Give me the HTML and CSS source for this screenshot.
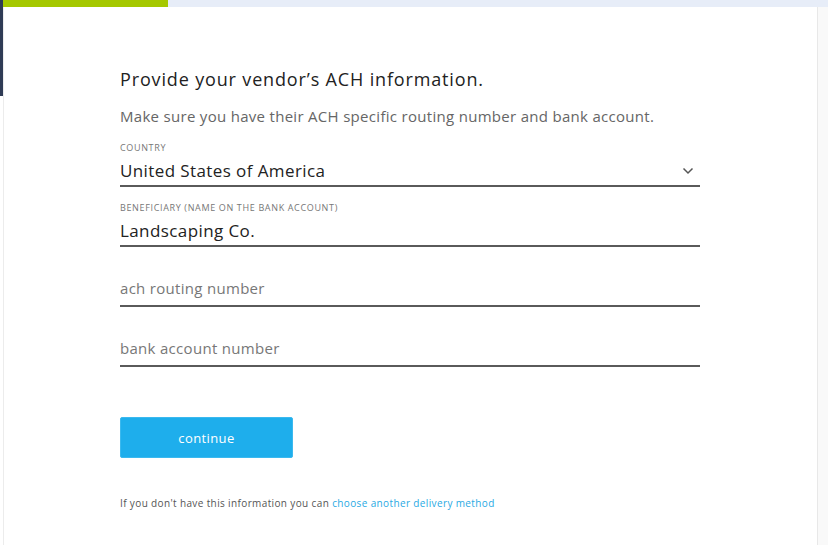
FILE: index.html
```html
<!DOCTYPE html>
<html>
<head>
<meta charset="utf-8">
<link rel="stylesheet" href="styles.css">
</head>
<body>
<div class="page">
  <div class="rail"><div class="rail-top"></div></div>
  <div class="column">
    <div class="progress"><div class="progress-fill"></div></div>
    <div class="body-row">
      <main class="main">
        <h1 class="title">Provide your vendor’s ACH information.</h1>
        <p class="subtitle">Make sure you have their ACH specific routing number and bank account.</p>
        <div class="field">
          <div class="label">COUNTRY</div>
          <div class="value select">
            <span>United States of America</span>
            <svg class="chev" width="12" height="8" viewBox="0 0 12 8"><path d="M1.5 1.5 L6 6 L10.5 1.5" fill="none" stroke="#555" stroke-width="1.5"/></svg>
          </div>
        </div>
        <div class="field">
          <div class="label">BENEFICIARY (NAME ON THE BANK ACCOUNT)</div>
          <div class="value">Landscaping Co.</div>
        </div>
        <div class="field">
          <div class="label"></div>
          <div class="value placeholder">ach routing number</div>
        </div>
        <div class="field">
          <div class="label"></div>
          <div class="value placeholder">bank account number</div>
        </div>
        <button class="btn">continue</button>
        <p class="footnote">If you don't have this information you can <a href="#">choose another delivery method</a></p>
      </main>
      <div class="gutter"></div>
    </div>
  </div>
</div>
</body>
</html>
```
FILE: styles.css
```css
html, body { margin: 0; padding: 0; }
body {
  font-family: "Open Sans", Lato, sans-serif;
  background: #ffffff;
  width: 828px;
  height: 545px;
  overflow: hidden;
}
.page { display: flex; height: 545px; }
.rail { width: 3px; flex: none; }
.rail-top { width: 3px; height: 96px; background: #2f3b55; }
.column { flex: 1; display: flex; flex-direction: column; }
.progress { height: 7px; background: #e7edf8; flex: none; }
.progress-fill { width: 165px; height: 7px; background: #a5c800; }
.body-row { flex: 1; display: flex; }
.main {
  flex: 1;
  background: #fff;
  border-left: 1px solid #ececec;
  border-right: 1px solid #e8e8e8;
  padding: 61px 0 0 116px;
}
.gutter { width: 10px; background: #f9f9f9; flex: none; }
.title { margin: 0; font-size: 18px; font-weight: 400; color: #222; line-height: 22px; letter-spacing: 0.85px; }
.subtitle { margin: 16px 0 0; font-size: 15px; color: #666; line-height: 20px; letter-spacing: 0.3px; }
.field { width: 580px; margin-top: 14px; }
.subtitle + .field { margin-top: 15px; }
.label { font-size: 9px; color: #777; height: 14px; line-height: 14px; margin-bottom: 2px; letter-spacing: 0.65px; }
.value {
  font-size: 17px; color: #222; letter-spacing: 0.4px;
  height: 28px; line-height: 28px;
  border-bottom: 2px solid #5a5a5a;
  display: flex; justify-content: space-between; align-items: center;
}
.placeholder {
  color: #777; font-size: 15px; letter-spacing: 0.3px;
  height: 22px; line-height: 22px; padding-bottom: 6px;
}
.chev { margin-right: 6px; }
.btn {
  display: block;
  margin-top: 50px;
  width: 173px; height: 41px;
  background: #1eaeec; color: #fff;
  border: 1px solid #3bb9ef; border-radius: 2px;
  font-family: inherit; font-size: 13px; letter-spacing: 0.4px;
}
.footnote { margin: 38px 0 0; font-size: 10px; line-height: 14px; color: #555; letter-spacing: 0.37px; }
.footnote a { color: #29a9e3; text-decoration: none; }
```
